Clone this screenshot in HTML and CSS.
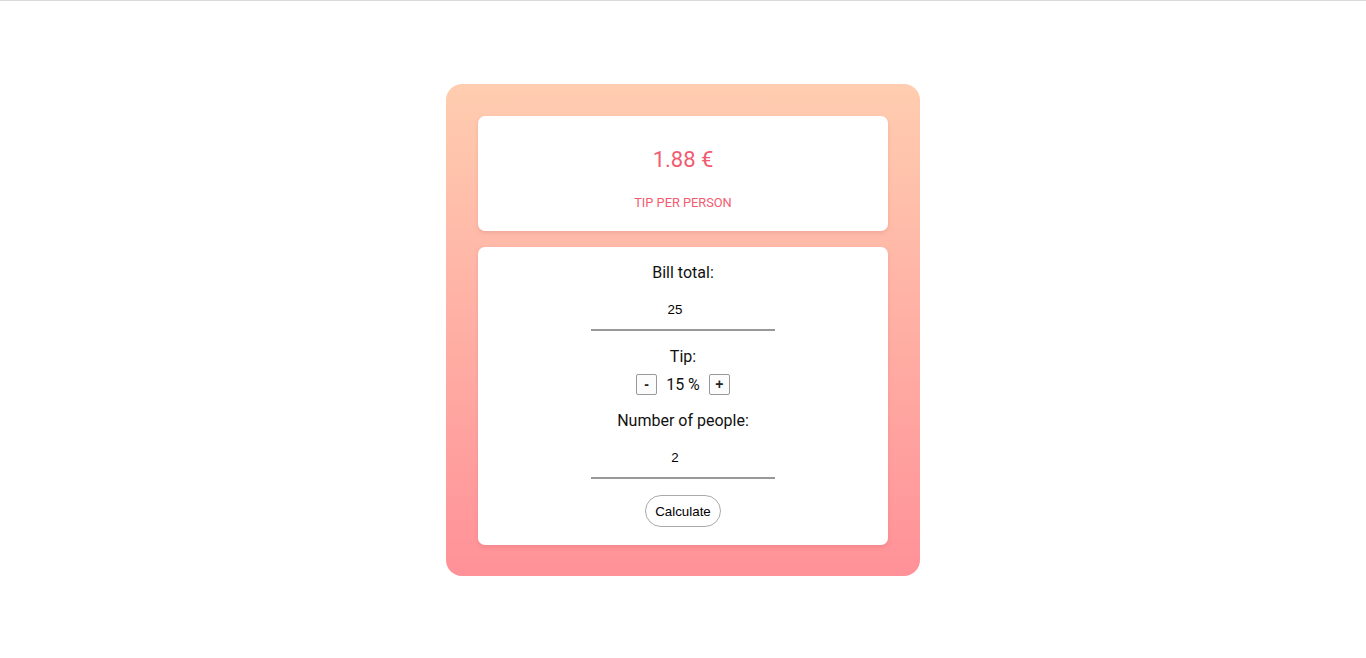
FILE: index.html
```html
<!DOCTYPE html>
<html lang="en">
<head>
<meta charset="utf-8">
<title>Tip calculator</title>
<link rel="stylesheet" href="styles.css">
</head>
<body>
<div class="page">
  <div class="calculator">
    <div class="card result">
      <div class="amount">1.88 €</div>
      <div class="amount-label">TIP PER PERSON</div>
    </div>
    <div class="card form">
      <div class="label">Bill total:</div>
      <input class="field" type="text" value="25">
      <div class="label label-tip">Tip:</div>
      <div class="tip-row">
        <button class="step">-</button>
        <span class="tip-value">15 %</span>
        <button class="step">+</button>
      </div>
      <div class="label label-people">Number of people:</div>
      <input class="field" type="text" value="2">
      <button class="calc">Calculate</button>
    </div>
  </div>
</div>
</body>
</html>
```
FILE: styles.css
```css
* { box-sizing: border-box; }
html, body { margin: 0; padding: 0; }
body {
  font-family: Roboto, "Liberation Sans", sans-serif;
  background: #fff;
  border-top: 1px solid #d9d9d9;
}
.page {
  height: 657px;
  display: flex;
  flex-direction: column;
  align-items: center;
  padding-top: 83px;
}
.calculator {
  width: 474px;
  height: 492px;
  border-radius: 16px;
  background: linear-gradient(to bottom, #ffcdb0 0%, #ff9198 100%);
  padding: 32px 32px 31px;
  display: flex;
  flex-direction: column;
  gap: 16px;
}
.card {
  background: #fff;
  border-radius: 7px;
  box-shadow: 0 2px 4px rgba(160, 60, 60, 0.15);
  display: flex;
  flex-direction: column;
  align-items: center;
}
.result {
  height: 115px;
  padding-top: 31px;
}
.amount {
  font-size: 22px;
  line-height: 26px;
  color: #f25c70;
}
.amount-label {
  margin-top: 23px;
  font-size: 12.8px;
  line-height: 14px;
  color: #f25c70;
}
.form {
  height: 298px;
  padding-top: 16px;
}
.label {
  font-size: 16px;
  line-height: 20px;
  color: #111;
}
.label-tip, .label-people { margin-top: 16px; }
.field {
  margin-top: 8px;
  width: 184px;
  height: 40px;
  border: none;
  border-bottom: 2px solid #999;
  text-align: center;
  font-family: "Liberation Sans", Arial, sans-serif;
  font-size: 13.33px;
  color: #000;
  background: transparent;
  outline: none;
  padding: 0 16px 2px 0;
}
.tip-row {
  margin-top: 6px;
  height: 22px;
  display: flex;
  align-items: center;
  gap: 9px;
}
.step {
  width: 21px;
  height: 21px;
  padding: 0;
  border: 1px solid #999;
  border-radius: 2px;
  background: #fcfcfc;
  font-family: "Liberation Sans", Arial, sans-serif;
  font-weight: bold;
  font-size: 14px;
  line-height: 19px;
  color: #222;
}
.tip-value {
  font-size: 16px;
  color: #111;
}
.calc {
  margin-top: 16px;
  height: 32px;
  padding: 0 9px;
  border: 1px solid #aaa;
  border-radius: 16px;
  background: #fff;
  font-family: "Liberation Sans", Arial, sans-serif;
  font-size: 13.33px;
  color: #000;
}
```
